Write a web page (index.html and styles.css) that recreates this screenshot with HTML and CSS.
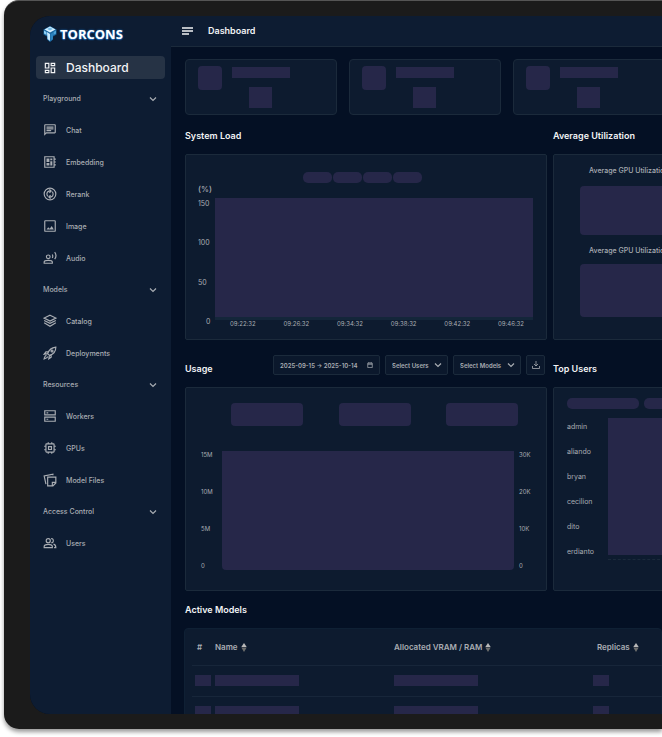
FILE: index.html
```html
<!DOCTYPE html>
<html lang="en">
<head>
    <meta charset="UTF-8">
    <meta name="viewport" content="width=device-width, initial-scale=1.0">
    <title>Torcons Dashboard</title>
    <link rel="stylesheet" href="styles.css">
</head>
<body>
    <svg class="sprite" aria-hidden="true">
        <symbol id="chevron" viewBox="0 0 8 8"><path d="M1 2.500l3 3 3-3" fill="none" stroke="currentColor" stroke-width="1.200"/></symbol>
        <symbol id="sort" viewBox="0 0 6 10"><path d="M3 0l3 4.500H0z" fill="#b9b9b9"/><path d="M0 5h6L3 10z" fill="#6c6d6c"/></symbol>
    </svg>
    <div class="device">
        <div class="screen">
            <aside class="sidebar">
                <a class="logo" href="#">
                    <svg viewBox="0 0 28 32">
                        <path d="M14 0l13 7v10l-7 4v6l-6 5-6-5v-6l-7-4V7z" fill="#17649f"/>
                        <path d="M14 1l11 6-11 6L3 7z" fill="#d9f1ff"/>
                        <path d="M8 6l6-3 6 3-6 3z" fill="#77bde6"/>
                        <path d="M2 9l5 3v6l-5-3z" fill="#8fd0f5"/>
                        <path d="M8 12l6 4v14l-5-4z" fill="#c8eaff"/>
                        <path d="M15 16l5-3v13l-5 4z" fill="#2d82bd"/>
                        <path d="M21 12l5-3v6l-5 3z" fill="#4ba3da"/>
                    </svg>
                    <span>TORCONS</span>
                </a>
                <nav>
                    <a class="item active" href="#">
                        <svg viewBox="0 0 24 24"><path class="solid" d="M19 5v2h-4V5h4M9 5v6H5V5h4m10 8v6h-4v-6h4M9 17v2H5v-2h4M21 3h-8v6h8V3zM11 3H3v10h8V3zm10 8h-8v10h8V11zm-10 4H3v6h8v-6z"/></svg>
                        Dashboard
                    </a>
                    <button class="group">Playground <svg><use href="#chevron"/></svg></button>
                    <a class="item" href="#">
                        <svg viewBox="0 0 24 24"><path class="solid" d="M4 4h16v12H5.170L4 17.170V4m0-2c-1.100 0-1.990.9-1.990 2L2 22l4-4h14c1.100 0 2-.9 2-2V4c0-1.100-.9-2-2-2H4zm2 10h8v2H6v-2zm0-3h12v2H6V9zm0-3h12v2H6V6z"/></svg>
                        Chat
                    </a>
                    <a class="item" href="#">
                        <svg viewBox="0 0 24 24"><path d="M3 3h16v18H3zM19 7h3M19 12h3M19 17h3"/><path class="solid" d="M6 6h5v6H6zM12.500 6H16v3h-3.500zM12.500 10.500H16V18h-3.500zM6 13.500h5V18H6z"/></svg>
                        Embedding
                    </a>
                    <a class="item" href="#">
                        <svg viewBox="0 0 24 24"><circle cx="12" cy="12" r="10"/><path d="M8.500 16A5.300 5.300 0 0 1 10 7h3M15.500 8A5.300 5.300 0 0 1 14 17h-3M11 4l3 3-3 3M13 14l-3 3 3 3"/></svg>
                        Rerank
                    </a>
                    <a class="item" href="#">
                        <svg viewBox="0 0 24 24"><rect x="3" y="3" width="18" height="18" rx="1"/><path class="solid" d="M6 18l3-4 2.500 2.500 3.500-4.500 3.500 6z"/></svg>
                        Image
                    </a>
                    <a class="item" href="#">
                        <svg viewBox="0 0 24 24"><circle cx="9" cy="10" r="3.200"/><path d="M2 21v-2c0-4 14-4 14 0v2zM16 6c1 2 1 4 0 6M20 2c3 4 3 8 0 12"/></svg>
                        Audio
                    </a>
                    <button class="group">Models <svg><use href="#chevron"/></svg></button>
                    <a class="item" href="#">
                        <svg viewBox="0 0 24 24"><path d="M12 2l10 5-10 5L2 7zM2 11l10 5 10-5M2 15l10 6 10-6"/></svg>
                        Catalog
                    </a>
                    <a class="item" href="#">
                        <svg viewBox="0 0 24 24"><path d="M8 13c2-6 6-10 14-11 0 7-4 12-11 14zM9 10H5l-3 4 6-1M14 15v4l-4 3 1-6M6 16c-3 0-3 3-4 6 3-1 6-1 6-4"/><circle cx="15.500" cy="8.500" r="1.700"/></svg>
                        Deployments
                    </a>
                    <button class="group">Resources <svg><use href="#chevron"/></svg></button>
                    <a class="item" href="#">
                        <svg viewBox="0 0 24 24"><path d="M3 3h18v7H3zM3 14h18v7H3z"/><path class="solid" d="M6 5.500h3v2H6zM6 16.500h3v2H6z"/></svg>
                        Workers
                    </a>
                    <a class="item" href="#">
                        <svg viewBox="0 0 24 24"><rect x="5" y="5" width="14" height="14" rx="1"/><path d="M9.500 9.500h5v5h-5zM9 2v3M15 2v3M9 19v3M15 19v3M2 9h3M2 15h3M19 9h3M19 15h3"/></svg>
                        GPUs
                    </a>
                    <a class="item" href="#">
                        <svg viewBox="0 0 24 24"><path d="M8 7h14v10l-5 5H8zM22 16h-6v6M5 19L2 5l15-3v2"/></svg>
                        Model Files
                    </a>
                    <button class="group">Access Control <svg><use href="#chevron"/></svg></button>
                    <a class="item" href="#">
                        <svg viewBox="0 0 24 24"><circle cx="9" cy="8" r="3.500"/><path d="M2 20v-2c0-5 14-5 14 0v2zM14 4.500c5-1 5 8 0 7M18 14c4 1 4 3 4 6h-3"/></svg>
                        Users
                    </a>
                </nav>
            </aside>

            <main class="main">
                <header class="topbar">
                    <button class="menu" aria-label="Toggle menu">
                        <svg viewBox="0 0 11 8"><path d="M0 1h11M0 4h11M0 7h7" stroke="currentColor" stroke-width="1.400"/></svg>
                    </button>
                    <h1>Dashboard</h1>
                </header>

                <div class="content">
                    <div class="cards">
                        <div class="card"><i class="sk avatar"></i><div class="card-info"><i class="sk line"></i><i class="sk value"></i></div></div>
                        <div class="card"><i class="sk avatar"></i><div class="card-info"><i class="sk line"></i><i class="sk value"></i></div></div>
                        <div class="card"><i class="sk avatar"></i><div class="card-info"><i class="sk line"></i><i class="sk value"></i></div></div>
                    </div>

                    <div class="row">
                        <section>
                            <div class="head"><h2>System Load</h2></div>
                            <div class="panel load">
                                <div class="legend"><i class="sk"></i><i class="sk"></i><i class="sk"></i><i class="sk"></i></div>
                                <div class="unit">(%)</div>
                                <div class="load-chart">
                                    <div class="load-axis"><span>150</span><span>100</span><span>50</span><span class="zero">0</span></div>
                                    <div class="load-body">
                                        <div class="sk load-plot"></div>
                                        <div class="times"><span>09:22:32</span><span>09:26:32</span><span>09:34:32</span><span>09:38:32</span><span>09:42:32</span><span>09:46:32</span></div>
                                    </div>
                                </div>
                            </div>
                        </section>
                        <section>
                            <div class="head"><h2>Average Utilization</h2></div>
                            <div class="panel average">
                                <h3>Average GPU Utilization</h3>
                                <div class="sk gauge"></div>
                                <h3>Average GPU Utilization</h3>
                                <div class="sk gauge"></div>
                            </div>
                        </section>
                    </div>

                    <div class="row">
                        <section>
                            <div class="head tall">
                                <h2>Usage</h2>
                                <div class="tools">
                                    <button class="control date">2025-09-15 → 2025-10-14
                                        <svg viewBox="0 0 8 8"><path d="M1 1.500h6v6H1zM1 3h6M2.500 0v2M5.500 0v2" fill="none" stroke="currentColor"/></svg>
                                    </button>
                                    <div class="select users">
                                        <select class="control" aria-label="Select Users"><option>Select Users</option></select>
                                        <svg><use href="#chevron"/></svg>
                                    </div>
                                    <div class="select models">
                                        <select class="control" aria-label="Select Models"><option>Select Models</option></select>
                                        <svg><use href="#chevron"/></svg>
                                    </div>
                                    <button class="control download" aria-label="Download">
                                        <svg viewBox="0 0 8 8"><path d="M4 0v5M2 3l2 2 2-2M.5 5v2.500h7V5" fill="none" stroke="currentColor" stroke-width=".8"/></svg>
                                    </button>
                                </div>
                            </div>
                            <div class="panel usage">
                                <div class="stats"><i class="sk"></i><i class="sk"></i><i class="sk"></i></div>
                                <div class="usage-chart">
                                    <div class="usage-axis"><span>15M</span><span>10M</span><span>5M</span><span>0</span></div>
                                    <div class="sk usage-plot"></div>
                                    <div class="usage-axis"><span>30K</span><span>20K</span><span>10K</span><span>0</span></div>
                                </div>
                            </div>
                        </section>
                        <section>
                            <div class="head tall"><h2>Top Users</h2></div>
                            <div class="panel top-users">
                                <div class="pills"><i class="sk"></i><i class="sk"></i></div>
                                <div class="users-chart">
                                    <ul>
                                        <li>admin</li>
                                        <li>aliando</li>
                                        <li>bryan</li>
                                        <li>cecilion</li>
                                        <li>dito</li>
                                        <li>erdianto</li>
                                    </ul>
                                    <div class="users-plot"><div class="sk"></div></div>
                                </div>
                            </div>
                        </section>
                    </div>

                    <section>
                        <div class="head models-head"><h2>Active Models</h2></div>
                        <div class="table-wrap">
                            <table>
                                <thead>
                                    <tr>
                                        <th class="col-num">#</th>
                                        <th class="col-name">Name <svg><use href="#sort"/></svg></th>
                                        <th class="col-ram">Allocated VRAM / RAM <svg><use href="#sort"/></svg></th>
                                        <th class="col-rep">Replicas <svg><use href="#sort"/></svg></th>
                                    </tr>
                                </thead>
                                <tbody>
                                    <tr><td><i class="sk short"></i></td><td><i class="sk long"></i></td><td><i class="sk long"></i></td><td><i class="sk short"></i></td></tr>
                                    <tr><td><i class="sk short"></i></td><td><i class="sk long"></i></td><td><i class="sk long"></i></td><td><i class="sk short"></i></td></tr>
                                </tbody>
                            </table>
                        </div>
                    </section>
                </div>
            </main>
        </div>
    </div>
</body>
</html>
```
FILE: styles.css
```css
* {
    box-sizing: border-box;
}
body {
    margin: 0;
    background: #fff;
    color: #a9adb3;
    font-family: Inter, "Liberation Sans", sans-serif;
    font-size: 7px;
    overflow: hidden;
}
h1, h2, h3, ul {
    margin: 0;
    padding: 0;
}
button, select {
    font-family: inherit;
    color: inherit;
    margin: 0;
    cursor: pointer;
}
a {
    color: inherit;
    text-decoration: none;
}
.sprite {
    display: none;
}
.sk {
    display: block;
    background: #262749;
}

/* device frame */
.device {
    height: calc(100vh - 8px);
    margin: 0 0 8px 4px;
    padding: 15px 0 15px 26px;
    background: #1b1b1b;
    border-top: 1px solid #555;
    border-radius: 15px 0 0 15px;
    box-shadow: 0 3px 4px rgba(0, 0, 0, 0.4);
}
.screen {
    display: flex;
    height: 100%;
    overflow: hidden;
    background: #041024;
    border-radius: 20px 0 0 20px;
}

/* sidebar */
.sidebar {
    flex: 0 0 141px;
    padding: 10px 6px;
    background: #0d1c32;
}
.logo {
    display: flex;
    align-items: center;
    gap: 3px;
    height: 16px;
    margin: 0 7px 14px;
    color: #fff;
    font: bold 13px "Open Sans", "Noto Sans", sans-serif;
    text-shadow: 0 0 2px #1c7ad0, 0 1px 1px #1c5fae;
}
.logo svg {
    width: 14px;
    height: 16px;
}
.item {
    display: flex;
    align-items: center;
    gap: 9px;
    height: 32px;
    padding: 0 7px;
    font-weight: 500;
}
.item svg {
    width: 14px;
    height: 14px;
    fill: none;
    stroke: currentColor;
    stroke-width: 2;
}
.item .solid {
    fill: currentColor;
    stroke: none;
}
.item.active {
    height: 23px;
    margin-bottom: 4px;
    background: #263345;
    border-radius: 4px;
    color: #f2f3f5;
    font-size: 12px;
}
.group {
    display: flex;
    align-items: center;
    justify-content: space-between;
    width: 100%;
    height: 31px;
    padding: 0 8px 0 7px;
    background: none;
    border: none;
    font-size: 7px;
    font-weight: 500;
}
.group svg {
    width: 8px;
    height: 8px;
}

/* top bar */
.main {
    flex: 1;
    min-width: 0;
}
.topbar {
    display: flex;
    align-items: center;
    gap: 15px;
    height: 31px;
    padding-left: 11px;
    background: #0d1c32;
    border-bottom: 1px solid #1b2a3b;
    color: #f2f3f5;
}
.menu {
    display: flex;
    padding: 0;
    background: none;
    border: none;
}
.menu svg {
    width: 11px;
    height: 8px;
}
h1, h2 {
    color: #f2f3f5;
    font-size: 9px;
    font-weight: 600;
    line-height: 12px;
}
.content {
    padding: 12px 0 0 14px;
}

/* cards */
.cards {
    display: grid;
    grid-template-columns: repeat(3, minmax(152px, 1fr));
    gap: 12px;
}
.card {
    display: flex;
    gap: 10px;
    height: 56px;
    padding: 6px 12px;
    background: #0d1b2f;
    border: 1px solid #1b2a3b;
    border-radius: 4px;
}
.avatar {
    width: 24px;
    height: 24px;
    border-radius: 4px;
}
.line {
    width: 58px;
    height: 11px;
    margin: 1px 0 9px;
}
.value {
    width: 23px;
    height: 21px;
    margin-left: 17px;
}

/* panels */
.row {
    display: grid;
    grid-template-columns: minmax(362px, 2fr) minmax(180px, 1fr);
    gap: 6px;
}
section {
    display: flex;
    flex-direction: column;
}
.head {
    display: flex;
    align-items: flex-end;
    justify-content: space-between;
    margin: 15px 0 12px;
}
.head.tall {
    height: 20px;
}
.head.models-head {
    margin-top: 13px;
}
.panel {
    flex: 1;
    background: #0d1b2f;
    border: 1px solid #1b2a3b;
    border-radius: 2px;
}

/* system load */
.load {
    padding: 17px 13px 11px 12px;
}
.legend {
    display: flex;
    justify-content: center;
    gap: 1px;
    padding-right: 6px;
}
.legend .sk {
    width: 29px;
    height: 11px;
    border-radius: 5px;
}
.unit {
    margin-bottom: 3px;
    font-size: 8px;
    font-weight: 500;
    line-height: 12px;
}
.load-chart {
    display: flex;
}
.load-axis {
    display: flex;
    flex-direction: column;
    justify-content: space-between;
    width: 17px;
    line-height: 12px;
}
.zero {
    padding-left: 8px;
}
.load-body {
    flex: 1;
}
.load-plot {
    height: 122px;
    border-bottom: 3px solid #14263a;
}
.times {
    display: flex;
    justify-content: space-between;
    padding: 0 9px 0 15px;
    font-size: 6px;
    line-height: 8px;
}

/* average utilization */
.average {
    display: flex;
    flex-direction: column;
    padding: 11px 26px 22px;
}
h3 {
    margin: 0 9px 10px;
    font-size: 7px;
    font-weight: 500;
    line-height: 10px;
    white-space: nowrap;
}
.gauge {
    height: 49px;
    border-radius: 4px;
}
.gauge + h3 {
    margin: 11px 9px 8px;
}
.gauge:last-child {
    height: auto;
    flex: 1;
}

/* usage */
.tools {
    display: flex;
    gap: 5px;
    margin-right: 2px;
}
.control {
    height: 20px;
    padding: 0 6px;
    background: #0b182c;
    border: 1px solid #1b2a3b;
    border-radius: 2px;
    font-size: 6px;
    font-weight: 600;
}
.control svg, .select svg {
    width: 8px;
    height: 8px;
}
.date {
    display: flex;
    align-items: center;
    justify-content: space-between;
    width: 107px;
    white-space: nowrap;
}
.control.date svg {
    width: 6px;
    height: 6px;
}
.select {
    position: relative;
}
.select select {
    width: 100%;
    appearance: none;
}
.select svg {
    position: absolute;
    top: 6px;
    right: 6px;
    pointer-events: none;
}
.users {
    width: 63px;
}
.models {
    width: 68px;
}
.download {
    display: flex;
    align-items: center;
    justify-content: center;
    width: 19px;
    padding: 0;
}
.usage {
    padding: 15px 15px 20px;
}
.stats {
    display: flex;
    justify-content: space-between;
    margin-bottom: 25px;
    padding: 0 13px 0 30px;
}
.stats .sk {
    width: 72px;
    height: 23px;
    border-radius: 4px;
}
.usage-chart {
    display: flex;
    height: 119px;
}
.usage-axis {
    display: flex;
    flex-direction: column;
    justify-content: space-between;
    width: 21px;
    font-size: 6px;
    line-height: 8px;
}
.usage-plot {
    flex: 1;
    border-radius: 0 0 4px 4px;
}
.usage-plot + .usage-axis {
    width: 17px;
    padding-left: 5px;
}

/* top users */
.top-users {
    padding: 10px 13px;
}
.pills {
    display: flex;
    gap: 5px;
    margin-bottom: 5px;
}
.pills .sk {
    width: 72px;
    height: 11px;
    border-radius: 5px;
}
.users-chart {
    display: flex;
}
.users-chart ul {
    width: 41px;
    list-style: none;
    line-height: 25px;
}
.users-plot {
    flex: 1;
    height: 146px;
    padding: 4px 0;
    border-bottom: 1px dashed #1b2a3b;
}
.users-plot .sk {
    height: 100%;
}

/* active models */
.table-wrap {
    padding: 0 7px;
    margin-left: -1px;
    background: #0d1b2f;
    border: 1px solid #0f2034;
    border-radius: 4px;
}
table {
    width: 100%;
    min-width: 500px;
    table-layout: fixed;
    border-collapse: collapse;
}
th, td {
    padding: 0;
    border-bottom: 1px solid #17263a;
    text-align: left;
}
th {
    height: 36px;
    font-size: 8px;
    font-weight: 600;
    white-space: nowrap;
}
th svg {
    width: 6px;
    height: 9px;
    margin-left: 1px;
    vertical-align: -2px;
}
td {
    height: 31px;
}
td:first-child {
    padding-left: 3px;
}
.col-num {
    width: 23px;
    padding-left: 5px;
}
.col-name {
    width: 179px;
}
.col-ram {
    width: 199px;
}
.col-rep {
    padding-left: 4px;
}
.short {
    width: 16px;
    height: 11px;
}
.long {
    width: 84px;
    height: 11px;
}
```
